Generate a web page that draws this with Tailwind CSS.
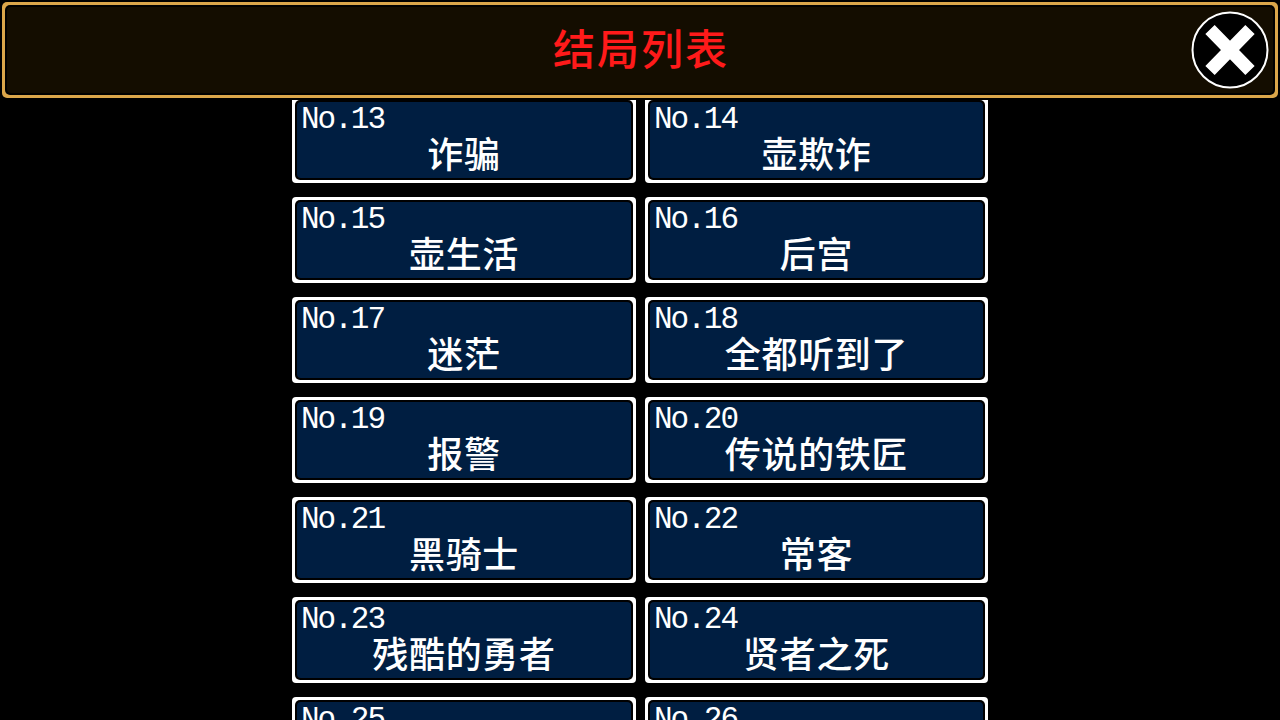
<!DOCTYPE html>
<html lang="zh-CN">
<head>
    <meta charset="UTF-8">
    <meta name="viewport" content="width=device-width, initial-scale=1.0">
    <title>结局列表</title>
    <script src="https://cdn.jsdelivr.net/npm/@tailwindcss/browser@4"></script>
</head>
<body class="bg-black">
    <div class="h-[720px] w-[1280px] overflow-hidden flex flex-col font-['Noto_Sans_CJK_SC',sans-serif]">
        <!-- Header -->
        <div class="h-[100px] shrink-0 p-[2px]">
            <header class="relative h-full rounded-[5px] bg-[#dba64a] p-[3px]">
                <div class="h-full rounded-[5px] bg-black p-[2px]">
                    <div class="h-full rounded-[4px] bg-[#140d00] pb-[6px] flex items-center justify-center">
                        <h1 class="pl-[2px] text-[42px] leading-none font-medium tracking-[2px] text-[#ff1a1a]">结局列表</h1>
                    </div>
                </div>
                <button class="absolute right-[9px] top-[9px] size-[78px]" aria-label="关闭">
                    <svg class="block size-full" viewBox="0 0 78 78">
                        <circle cx="39" cy="39" r="37.5" fill="#000" stroke="#fff" stroke-width="2"/>
                        <path d="M19 18.5L59 59.5M59 18.5L19 59.5" stroke="#fff" stroke-width="13"/>
                    </svg>
                </button>
            </header>
        </div>

        <!-- Ending list -->
        <main class="flex-1 min-h-0 overflow-hidden">
            <div id="ending-list" class="mx-auto -mt-[3px] w-[696px] grid grid-cols-[344px_343px] gap-x-[9px] gap-y-[14px]"></div>
        </main>
    </div>

    <script>
        const endings = [
            [13, '诈骗'], [14, '壶欺诈'],
            [15, '壶生活'], [16, '后宫'],
            [17, '迷茫'], [18, '全都听到了'],
            [19, '报警'], [20, '传说的铁匠'],
            [21, '黑骑士'], [22, '常客'],
            [23, '残酷的勇者'], [24, '贤者之死'],
            [25, ''], [26, '']
        ];

        document.getElementById('ending-list').innerHTML = endings.map(([no, name]) => `
            <div class="h-[86px] rounded-[4px] bg-white p-[3px]">
                <div class="h-full rounded-[5px] bg-black p-[2px]">
                    <div class="h-full rounded-[4px] bg-[#001e41] text-white">
                        <div class="h-[32px] pl-1 font-['Liberation_Mono',monospace] text-[31px] leading-[36px] tracking-[-2px]">No.${no}</div>
                        <div class="h-[36px] text-center text-[36px] leading-[36px] font-medium tracking-[0.7px]">${name}</div>
                    </div>
                </div>
            </div>
        `).join('');
    </script>
</body>
</html>
